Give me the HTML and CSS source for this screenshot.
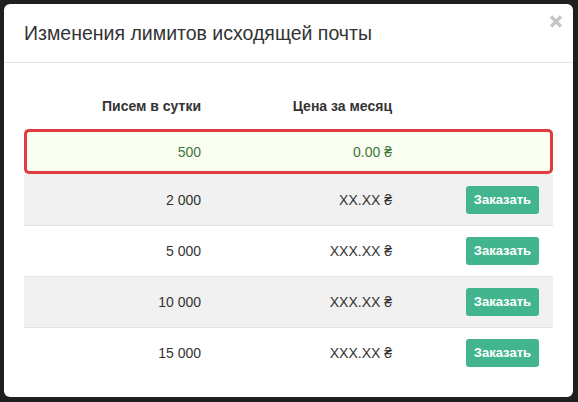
FILE: index.html
```html
<!DOCTYPE html>
<html lang="ru">
<head>
<meta charset="utf-8">
<link rel="stylesheet" href="styles.css">
</head>
<body>
<div class="modal">
  <div class="modal-header">
    <h4 class="modal-title">Изменения лимитов исходящей почты</h4>
    <span class="close" aria-label="Закрыть"><svg width="14" height="13" viewBox="0 0 14 13"><path d="M2 1.5 L12 11.5 M12 1.5 L2 11.5" stroke="#c6c6c6" stroke-width="3.4" stroke-linecap="butt"/></svg></span>
  </div>
  <div class="modal-body">
    <table class="limits">
      <thead>
        <tr>
          <th class="c1">Писем в сутки</th>
          <th class="c2">Цена за месяц</th>
          <th class="c3"></th>
        </tr>
      </thead>
      <tbody>
        <tr class="current">
          <td class="c1">500</td>
          <td class="c2">0.00 ₴</td>
          <td class="c3"></td>
        </tr>
        <tr class="striped">
          <td class="c1">2 000</td>
          <td class="c2">XX.XX ₴</td>
          <td class="c3"><span class="btn">Заказать</span></td>
        </tr>
        <tr>
          <td class="c1">5 000</td>
          <td class="c2">XXX.XX ₴</td>
          <td class="c3"><span class="btn">Заказать</span></td>
        </tr>
        <tr class="striped">
          <td class="c1">10 000</td>
          <td class="c2">XXX.XX ₴</td>
          <td class="c3"><span class="btn">Заказать</span></td>
        </tr>
        <tr>
          <td class="c1">15 000</td>
          <td class="c2">XXX.XX ₴</td>
          <td class="c3"><span class="btn">Заказать</span></td>
        </tr>
      </tbody>
    </table>
  </div>
</div>
</body>
</html>
```
FILE: styles.css
```css
html, body {
  margin: 0;
  padding: 0;
  background: #1f1f1f;
  font-family: "Liberation Sans", Arial, sans-serif;
  color: #333;
}
body {
  padding: 4px 5px 0 4px;
  height: 402px;
  box-sizing: border-box;
  overflow: hidden;
}
.modal {
  background: #fff;
  border-radius: 6px;
  width: 569px;
  height: 393px;
  position: relative;
  box-sizing: border-box;
}
.modal-header {
  height: 58px;
  border-bottom: 1px solid #e5e5e5;
  padding: 0 20px;
  display: flex;
  align-items: center;
  position: relative;
}
.modal-title {
  margin: 0;
  font-size: 19.5px;
  font-weight: normal;
  color: #333;
  padding-top: 1px;
}
.close {
  position: absolute;
  right: 10px;
  top: 11px;
  width: 14px;
  height: 13px;
  line-height: 0;
}
.modal-body {
  padding: 20px 20px 0 20px;
}
.limits {
  width: 529px;
  border-collapse: separate;
  border-spacing: 0;
  font-size: 14px;
}
.limits th {
  font-size: 14px;
  font-weight: bold;
  height: 46px;
  padding: 0 8px;
  text-align: right;
  vertical-align: middle;
  box-sizing: border-box;
}
.limits td {
  height: 51px;
  padding: 0 8px;
  text-align: right;
  vertical-align: middle;
  border-top: 1px solid #e3e3e3;
  box-sizing: border-box;
}
.c1 { width: 185px; }
.c2 { width: 191px; }
.c3 { padding-right: 14px !important; }
.limits tr.striped td { background: #f1f1f1; }
.limits tr.current td {
  height: 45px;
  background: #fbfff1;
  color: #3c763d;
  border-top: 3px solid #e03b3f;
  border-bottom: 3px solid #e03b3f;
}
.limits tr.current td:first-child {
  border-left: 3px solid #e03b3f;
  border-radius: 5px 0 0 5px;
}
.limits tr.current td:last-child {
  border-right: 3px solid #e03b3f;
  border-radius: 0 5px 5px 0;
}
.limits tr.current + tr td { border-top: none; }
.btn {
  display: inline-block;
  background: #43b58e;
  color: #fff;
  font-weight: bold;
  font-size: 13px;
  padding: 0 8px;
  height: 28px;
  line-height: 28px;
  border-radius: 3px;
}
```
